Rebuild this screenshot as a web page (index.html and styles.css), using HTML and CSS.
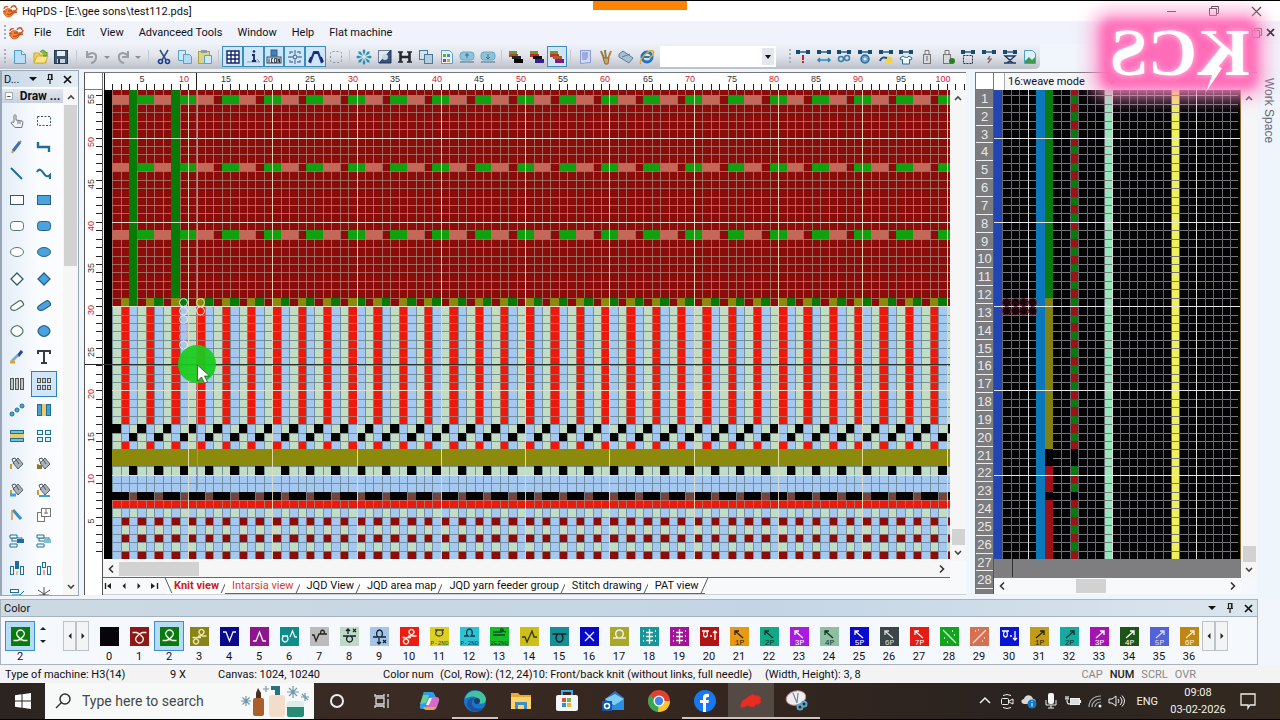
FILE: index.html
```html
<!DOCTYPE html>
<html lang="en">
<head>
<meta charset="utf-8">
<title>HqPDS - [E:\gee sons\test112.pds]</title>
<link rel="stylesheet" href="styles.css">
</head>
<body>
<header class="titlebar">
  <span class="ic logo" data-icon="crab"></span>
  <h1>HqPDS - [E:\gee sons\test112.pds]</h1>
  <span class="share-bar"></span>
  <div class="window-controls">
    <button aria-label="Minimize" data-icon="min"></button>
    <button aria-label="Restore" data-icon="restore"></button>
    <button aria-label="Close" data-icon="close"></button>
  </div>
</header>
<nav class="menubar">
  <span class="grip"></span><span class="ic logo" data-icon="crab"></span>
  <button>File</button><button>Edit</button><button>View</button><button>Advanceed Tools</button><button>Window</button><button>Help</button><button>Flat machine</button>
  <span class="menu-right"><button aria-label="Restore document" data-icon="restore"></button><button aria-label="Close document" data-icon="closeb"></button></span>
</nav>
<div class="toolbar">
  <span class="grip"></span>
  <div class="tg" data-tools="new open save"></div><i class="sep"></i>
  <div class="tg history" data-tools="undo drop redo drop"></div><i class="sep"></i>
  <div class="tg" data-tools="cut copy paste"></div><i class="sep thin"></i>
  <div class="tg" data-tools="*grid *info *iconv *snap *curve marquee"></div><i class="sep thin"></i>
  <div class="tg" data-tools="burst contrast H dup docc ovalU ovalD"></div><i class="sep thin"></i>
  <div class="tg" data-tools="layA layB *layC"></div><i class="sep thin"></i>
  <div class="tg" data-tools="note brushes tag ie"></div>
  <div class="combo"><select aria-label="Search"><option></option></select><span class="ic" data-icon="drop2"></span></div>
  <span class="grip second"></span>
  <div class="tg" data-tools="mRed mArrow mGears mGear mYellow mShirt usb usbg mFrame mBolt mX mDoc"></div>
</div>
<main class="work">
  <aside class="dock">
    <div class="dock-title"><span>D...</span><button aria-label="Options" data-icon="tri"></button><button aria-label="Pin" data-icon="pin"></button><button aria-label="Close" data-icon="closeb"></button></div>
    <div class="dock-body">
      <div class="dock-main">
        <button class="group"><i>−</i>Draw ...</button>
        <div class="palette" id="palette"></div>
      </div>
      <div class="vscroll dock-scroll"><button aria-label="Up" data-icon="up"></button><i></i><button aria-label="Down" data-icon="down"></button></div>
    </div>
  </aside>
  <section class="editor">
    <div class="corner"></div>
    <svg class="ruler-top" id="rulerTop"></svg>
    <svg class="ruler-left" id="rulerLeft"></svg>
    <svg class="fabric" id="fabric"></svg>
    <div class="vscroll"><button aria-label="Up" data-icon="up"></button><i></i><button aria-label="Down" data-icon="down"></button></div>
    <div class="hscroll"><button aria-label="Left" data-icon="left"></button><i></i><button aria-label="Right" data-icon="right"></button></div>
    <div class="tabs">
      <div class="tabnav"><button aria-label="First" data-icon="first"></button><button aria-label="Previous" data-icon="prev"></button><button aria-label="Next" data-icon="next"></button><button aria-label="Last" data-icon="last"></button></div>
      <button class="tab active">Knit view</button><button class="tab red">Intarsia view</button><button class="tab">JQD View</button><button class="tab">JQD area map</button><button class="tab">JQD yarn feeder group</button><button class="tab">Stitch drawing</button><button class="tab">PAT view</button>
    </div>
  </section>
  <section class="weave">
    <div class="corner"></div>
    <div class="mode"><i></i><button>16:weave mode</button><span data-icon="down" class="ic"></span></div>
    <div class="rows" id="rows"></div>
    <svg class="weave-grid" id="weave"></svg>
    <div class="vscroll"><button aria-label="Up" data-icon="up"></button><i></i><button aria-label="Down" data-icon="down"></button></div>
    <div class="hscroll"><button aria-label="Left" data-icon="left"></button><i></i><button aria-label="Right" data-icon="right"></button></div>
  </section>
  <aside class="sidetab">Work Space</aside>
</main>
<section class="colors">
  <div class="colors-title"><span>Color</span><button aria-label="Options" data-icon="tri"></button><button aria-label="Pin" data-icon="pin"></button><button aria-label="Close" data-icon="closeb"></button></div>
  <div class="colors-body">
    <div class="current" id="current"></div>
    <div class="spin"><button aria-label="Increase" data-icon="sup"></button><button aria-label="Decrease" data-icon="sdown"></button></div>
    <div class="pager"><button aria-label="Previous colors" data-icon="prev"></button><button aria-label="Next colors" data-icon="next"></button></div>
    <div class="swatches" id="swatches"></div>
    <div class="pager end"><button aria-label="Previous" data-icon="prev"></button><button aria-label="Next" data-icon="next"></button></div>
  </div>
</section>
<footer class="status">
  <span class="s1">Type of machine: H3(14)</span><span class="s2">9 X</span><span class="s3">Canvas: 1024, 10240</span><span class="s4">Color num</span><span class="s5">(Col, Row): (12, 24)10: Front/back knit (without links, full needle)</span><span class="s6">(Width, Height): 3, 8</span>
  <span class="lock">CAP</span><span class="lock on">NUM</span><span class="lock">SCRL</span><span class="lock">OVR</span>
</footer>
<div class="taskbar">
  <button class="start" aria-label="Start" data-icon="win"></button>
  <label class="search"><span class="ic" data-icon="mag"></span><input type="text" placeholder="Type here to search" aria-label="Type here to search"><span class="ic art" data-icon="bottles"></span></label>
  <button class="app" aria-label="Cortana" data-icon="cortana"></button><button class="app" aria-label="Task view" data-icon="taskview"></button><button class="app" aria-label="Copilot" data-icon="copilot"></button><button class="app run" aria-label="Edge" data-icon="edge"></button><button class="app" aria-label="Files" data-icon="folder"></button><button class="app" aria-label="Store" data-icon="store"></button><button class="app" aria-label="Outlook" data-icon="outlook"></button><button class="app" aria-label="Chrome" data-icon="chrome"></button><button class="app run" aria-label="Facebook" data-icon="fb"></button><button class="app run cur" aria-label="HqPDS" data-icon="hq"></button><button class="app run" aria-label="Snipping tool" data-icon="snip"></button>
  <div class="tray">
    <button aria-label="Show hidden icons" data-icon="chev"></button><button aria-label="Meet now" data-icon="meet"></button><button aria-label="OneDrive" data-icon="cloud"></button><button aria-label="Microphone" data-icon="mic"></button><button aria-label="Battery" data-icon="batt"></button><button aria-label="Network" data-icon="wifi"></button><button aria-label="Volume" data-icon="vol"></button>
    <span class="lang">ENG</span>
    <div class="clock"><span>09:08</span><span>03-02-2026</span></div>
    <button class="notif" aria-label="Notifications" data-icon="notif"></button>
  </div>
</div>
<div class="brand"><span>KCS</span></div>
<script src="app.js"></script>
</body>
</html>
```

FILE: styles.css
```css
* { box-sizing: border-box; }
body {
  margin: 0; height: 100vh; overflow: hidden; position: relative;
  display: flex; flex-direction: column;
  font-family: Roboto, "Noto Sans", sans-serif; font-size: 11px; line-height: 15px; color: #101016;
  background: #f1f6fc; border-top: 1px solid #000; border-bottom: 1px solid #000;
}
button { font: inherit; color: inherit; background: none; border: 0; padding: 0; margin: 0; display: inline-flex; align-items: center; justify-content: center; }
svg { display: block; flex: none; }
.ic { display: inline-flex; align-items: center; justify-content: center; }

.titlebar { height: 20px; flex: none; display: flex; align-items: center; padding: 0 18px 0 2px; background: #fff; position: relative; }
.titlebar h1 { font-size: 11px; font-weight: 400; margin: 0 0 0 4px; }
.share-bar { position: absolute; left: 50%; transform: translateX(-50%); top: 0; width: 94px; height: 9px; background: #ff8200; }
.window-controls { margin-left: auto; display: flex; gap: 30px; }

.menubar { height: 23px; flex: none; display: flex; align-items: center; gap: 15px; padding: 0 4px; background: #f0f3fb; }
.menubar > .logo { margin: 0 -5px 0 -13px; }
.menu-right { margin-left: auto; display: flex; gap: 2px; }
.grip { width: 2px; height: 15px; flex: none; background: repeating-linear-gradient(#a9aebb 0 2px, transparent 2px 4px); }

.toolbar { height: 25px; flex: none; display: flex; align-items: center; padding: 0 0 0 4px; background: linear-gradient(#eef1f8, #e2e5ec 45%, #bcc0c9); border-radius: 0 0 5px 0; width: 1040px; max-width: 100%; }
.tg { display: flex; align-items: center; }
.tg button { width: 21px; height: 21px; flex: none; }
.tg button:nth-child(3n) { width: 20px; }
.tg .drop { width: 9px; }
.tg.history button:not(.drop) { width: 22px; }
.tg button.sel { background: #cfe6f8; border: 1px solid #3c8cbc; }
.sep { width: 1px; height: 13px; background: #c3c8d1; margin: 0 4px 0 5px; flex: none; }
.sep.thin { margin: 0 3px; }
.toolbar > .grip { margin-right: 3px; }
.combo { flex: 1; min-width: 0; height: 21px; margin: 0 13px 0 3px; background: #fff; display: flex; }
.combo select { flex: 1; min-width: 0; border: 0; background: none; appearance: none; }
.combo .ic { width: 12px; margin: 2px; background: #e3e6ec; }
.toolbar > .grip.second { margin-right: 1px; }

.work { flex: 1; min-height: 0; display: flex; padding-top: 2px; background: #eef5fb; }
.dock { width: 79px; flex: none; display: flex; flex-direction: column; border: 1px solid #9aa7b8; border-width: 1px 1px 1px 2px; margin: -1px 0 3px; background: #fbfcff; }
.dock-title { height: 16px; display: flex; align-items: center; gap: 7px; padding-left: 2px; background: linear-gradient(90deg, #c8d8e6, #e6eef5); }
.dock-title span { width: 17px; }
.dock-body { flex: 1; min-height: 0; display: flex; padding-top: 2px; }
.dock-main { flex: 1; min-width: 0; display: flex; flex-direction: column; overflow: hidden; background: linear-gradient(90deg, #e4edf7, #fafcff 60%); }
.group { height: 14px; background: linear-gradient(#e1e6ef, #c9d1df); font-weight: 700; font-size: 12px; white-space: nowrap; gap: 7px; flex: none; }
.group i { font-style: normal; font-size: 8px; line-height: 7px; width: 8px; height: 8px; border: 1px solid #a5a9b2; background: #fff; color: #333; }
.palette { flex: 1; margin: 5px 6px -12px 2px; display: grid; grid-template-columns: 1fr 1fr; grid-auto-rows: 1fr; min-height: 0; }
.palette button { min-height: 0; }
.palette button.sel { background: #d0e5f7; border: 1px solid #3080b8; }
.vscroll, .hscroll { background: #f6f6f7; display: flex; min-width: 0; min-height: 0; }
.vscroll { flex-direction: column; align-items: center; }
.vscroll i, .hscroll i { background: #d2d2d3; }
.vscroll button { height: 16px; flex: none; }
.vscroll i { width: 13px; height: 16px; margin-top: auto; }
.dock-scroll { width: 15px; }
.dock-scroll i { height: 161px; margin-top: 0; margin-bottom: auto; }
.hscroll { align-items: center; }
.hscroll button { width: 16px; }
.hscroll button:last-child { margin: 0 0 0 auto; }

.editor { flex: 1; min-width: 0; margin: 1px 0 4px 5px; display: grid; grid-template-columns: 18px 1fr 16px; grid-template-rows: 17px 1fr 17px 17px; background: #f8f9fb; border-left: 1px solid #555; border-top: 1px solid #777; }
.corner { border: 1px solid #777; border-width: 0 1px 1px 0; background: #fff; }
.ruler-top { grid-column: 2 / 4; width: 100%; height: 100%; background: #fff; }
.ruler-left { width: 100%; height: 100%; background: #fff; grid-row: 2 / 5; grid-column: 1; border-right: 1px solid #555; }
.fabric { width: 100%; height: 100%; grid-row: 2; grid-column: 2; }
.editor .hscroll { grid-column: 2 / 3; border-bottom: 1px solid #666; }
.editor .hscroll i { width: 80px; height: 14px; }
.tabs { grid-column: 2 / 4; display: flex; align-items: stretch; border-bottom: 1px solid #cdd2d8; }
.tabnav { display: flex; width: 57px; justify-content: space-between; margin-right: 7px; }
.tab { position: relative; padding: 0 6px 0 7px; white-space: nowrap; border-bottom: 1px solid #666; background: #fff; }
.tab::after, .tab.active::before { content: ""; position: absolute; top: 0; bottom: 0; right: 0; border-right: 1px solid #555; transform: skewX(-24deg); }
.tab.active::before { right: auto; left: 1px; transform: skewX(24deg); }
.tab.active { color: #c8201c; font-weight: 700; border-bottom-color: #fff; }
.tab.red { color: #d63a32; }

.weave { width: 282px; flex: none; margin: 1px 0 5px 9px; display: grid; grid-template-columns: 18px 1fr 16px; grid-template-rows: 17px 1fr 16px; border: 1px solid #777; border-width: 1px 0 0 1px; background: #f4f7fb; }
.mode { grid-column: 2 / 4; display: flex; align-items: center; background: #f5f6fa; }
.mode i { width: 11px; height: 100%; background: #fff; border-right: 1px solid #aaa; margin-right: 3px; }
.mode .ic { margin-left: 22px; }
.rows { grid-row: 2 / 4; display: flex; flex-direction: column; background: #7c7c7e; padding-bottom: 5px; border-right: 1px solid #555; }
.rows span { flex: 1; min-height: 0; font: 13px/17px "Liberation Sans", sans-serif; color: #e8e8ea; text-align: center; border-bottom: 1px solid #eee; }
.weave-grid { width: 100%; height: 100%; grid-row: 2; grid-column: 2; background: #7e7e80; }
.weave .hscroll { grid-column: 2; grid-row: 3; background: #f7f9fb; }
.weave .hscroll i { width: 30px; height: 14px; margin-left: 66px; }
.sidetab { flex: 1 0 23px; max-width: 23px; writing-mode: vertical-rl; font: 12px/23px "Liberation Sans", sans-serif; color: #667; padding-top: 7px; white-space: nowrap; }

.colors { height: 66px; flex: none; margin-right: 22px; border: 1px solid #a9b3bf; display: flex; flex-direction: column; background: #f5f8fd; }
.colors-title { height: 17px; flex: none; display: flex; align-items: center; gap: 8px; padding: 0 3px; background: linear-gradient(90deg, #ccd9e2, #c3d5e4 60%, #dbe5ee); border-bottom: 1px solid #a3b3c2; }
.colors-title span { margin-right: auto; }
.colors-body { flex: 1; display: flex; padding: 4px 0 0 4px; align-items: flex-start; }
.sw { display: flex; flex-direction: column; align-items: center; flex: 1 1 30px; min-width: 0; line-height: 12px; }
.sw b { width: 30px; height: 30px; display: flex; align-items: center; justify-content: center; border: 1px solid transparent; font-weight: 400; }
.sw.sel b { background: #b6dcf5; border-color: #3d8ec8; }
.current { width: 30px; flex: none; }
.spin { width: 16px; height: 28px; display: flex; flex-direction: column; justify-content: space-between; padding: 5px 0; }
.pager { display: flex; height: 30px; flex: none; }
.pager button { width: 13px; border: 1px solid #bdc2c9; background: #f3f4f6; }
.spin + .pager { margin: 0 5px 0 13px; }
.swatches { flex: 1; display: flex; }
.pager.end { margin: 0 29px 0 -2px; }

.status { height: 18px; flex: none; display: flex; align-items: center; padding: 0 84px 0 5px; background: #f3f3f4; white-space: nowrap; }
.status span { flex-shrink: 0; }
.s1 { width: 165px; } .s2 { width: 48px; } .s3 { width: 165px; } .s4 { width: 57px; } .s5 { width: 325px; } .s6 { flex: 1; }
.lock { color: #888; margin-left: 7px; }
.lock.on { color: #222; font-weight: 500; }

.taskbar { height: 36px; flex: none; display: flex; background: linear-gradient(90deg, #2b2420, #3a2b24 30%, #33261f 60%, #2a2320 80%, #33291f); color: #f4f0ec; }
.start { width: 45px; }
.search { width: 269px; background: #f7f8f8; display: flex; align-items: center; padding: 0 3px 0 9px; }
.search input { flex: 1; min-width: 0; border: 0; background: none; font: 14px/20px Roboto, "Noto Sans", sans-serif; padding: 0 0 0 10px; }
.search input::placeholder { color: #45474a; opacity: 1; }
.app { width: 46px; position: relative; }
.app.cur { background: #544943; }
.app.run { border-bottom: 2px solid #cfc4be; padding-top: 2px; background-clip: padding-box; }
.tray { margin-left: auto; display: flex; align-items: center; padding-right: 21px; }
.tray > button { width: 22px; }
.lang { margin: 0 12px 0 8px; }
.clock { display: flex; flex-direction: column; align-items: center; width: 56px; line-height: 17px; font-size: 11px; }
.tray > .notif { margin-left: 11px; }

.brand { position: absolute; right: 24px; top: 18px; width: 152px; height: 66px; display: flex; align-items: center; justify-content: center; pointer-events: none; }
.brand::before { content: ""; position: absolute; inset: 0 -2px -4px -4px; border-radius: 12px; background: #ff6db8; box-shadow: 0 0 14px 10px #ff9acfbb; filter: blur(5px); }
.brand::after { content: ""; position: absolute; right: 34px; top: 46px; width: 16px; height: 27px; background: #fff; clip-path: polygon(60% 0, 100% 12%, 0 100%); }
.brand span { position: relative; font: 700 68px/60px "Liberation Serif", serif; color: #fff; transform: scaleX(-1); text-shadow: 0 0 6px #ffd0ea; }
```

FILE: app.js
```javascript
const T = '#1d6f96', B = '#4aa3dc';
const svg = (w, h, inner, vb) => `<svg width="${w}" height="${h}" viewBox="${vb || `0 0 ${w} ${h}`}" fill="none">${inner}</svg>`;
const p = (d, c = '#222', w = 1, f = 'none') => `<path d="${d}" stroke="${c}" stroke-width="${w}" fill="${f}"/>`;
const r = (x, y, w, h, f, s = 'none') => `<rect x="${x}" y="${y}" width="${w}" height="${h}" fill="${f}" stroke="${s}"/>`;
const c = (x, y, q, f, s = 'none', w = 1) => `<circle cx="${x}" cy="${y}" r="${q}" fill="${f}" stroke="${s}" stroke-width="${w}"/>`;
const i16 = inner => svg(16, 16, inner);
const mach = inner => i16(p('M1 3h14', '#1d6590', 1.500) + r(1, 1, 4, 4, '#174b72') + r(11, 1, 4, 4, '#174b72') + inner);
const bars = (a, b, d) => i16(r(1, 2, 8, 4, '#6b9c2a') + r(1, 5, 9, 3, a) + r(4, 7, 9, 3, b) + r(6, 10, 9, 4, d));
const pot = x => p('M4 8l5-5 5 6-5 5z', '#54606a', 1, '#a8b2b8') + p('M5 9L3 4l3-1 4 6', '#4b555c') + p('M2 9v5', '#c89a26', 2) + x;
const need = f => r(3, 5, 10, 3, '#fff', T) + p('M1 2h7v3H1z', T, 1, f) + p('M1 11h7v3H1z', T, 1, '#fff');

const icons = {
  crab: i16(p('M2 11c-1-4 3-6 6-5s5 5 1 7-6 0-6-2z', '#d2561c', 1, '#ee8c3c') + p('M2 6c0-2 2-3 4-2M9 5c1-3 5-3 5 0M11 8c3 0 4-1 4-3M1 8l3 1M10 10l5-1M6 8h4M5 11c2 1 3 1 5-1', '#c64b16', 1.3)),
  min: svg(12, 12, p('M1 6.5h9', '#333')), restore: svg(12, 12, p('M1.500 3.500h7v7h-7zM3.500 3.500v-2h7v7h-2', '#333')),
  close: svg(12, 12, p('M2 2l9 9M11 2l-9 9', '#333', 1.100)), closeb: svg(11, 11, p('M2 2l7 7M9 2l-7 7', '#111', 1.700)),
  tri: svg(10, 10, p('M1 3h8L5 7z', 'none', 0, '#111')), pin: svg(10, 12, p('M2 6.500h6M3.500 6V1.500h3V6M5 7v4M7 1v5', '#222', 1.200)),
  up: svg(10, 10, p('M2 7l3-3 3 3', '#444', 1.600)), down: svg(10, 10, p('M2 3l3 3 3-3', '#444', 1.600)),
  left: svg(10, 10, p('M7 1.500L3.500 5 7 8.500', '#333', 1.600)), right: svg(10, 10, p('M3 1.500L6.500 5 3 8.500', '#333', 1.600)),
  prev: svg(8, 8, p('M5.500 1v6L2.500 4z', 'none', 0, '#222')), next: svg(8, 8, p('M2.500 1v6l3-3z', 'none', 0, '#222')),
  first: svg(10, 8, p('M8 1v6L4 4z', 'none', 0, '#222') + p('M2.500 1v6', '#222', 1.400)), last: svg(10, 8, p('M1 1v6l4-3z', 'none', 0, '#222') + p('M7.500 1v6', '#222', 1.400)),
  sup: svg(6, 5, p('M0 4h6L3 1z', 'none', 0, '#222')), sdown: svg(6, 5, p('M0 1h6L3 4z', 'none', 0, '#222')),
  drop2: svg(8, 8, p('M1 2h6L4 6z', 'none', 0, '#111')),
  new: i16(p('M2.500 1.500h7l4 4v9h-11z', '#4c9cc8', 1, '#b9def5') + p('M9.500 1.500v4h4', '#4c9cc8', 1, '#e9f7ff')),
  open: i16(p('M1 4h5l1 2h6v8H1z', '#d3a52f', 1, '#f2ce5b') + p('M1 14l3-7h11l-3 7z', '#d8ad3a', 1, '#fae588') + p('M7 3c2-3 5-2 6 1l1-1v4h-4l1-1', '#5a9a24', 1, '#83bb44')),
  save: i16(r(1.500, 1.500, 13, 13, '#40576e', '#24384d') + r(4, 2, 8, 5, '#e6edf3') + r(4, 10, 8, 4, '#c5d4df') + r(5, 10, 2, 4, '#24384d')),
  undo: i16(p('M3 7c4-5 10-3 9 2-0 3-3 5-5 5M3 2v6h6', '#9a9ea5', 2)), redo: i16(p('M13 7C9 2 3 4 4 9c0 3 3 5 5 5M13 2v6H7', '#9a9ea5', 2)),
  drop: svg(7, 8, p('M0 3h6L3 6z', 'none', 0, '#8a8e95')),
  cut: i16(p('M4 1l6 10M12 1L6 11', '#33517e', 1.600) + c(4.500, 12.500, 2, 'none', '#1d3f86', 1.600) + c(11.500, 12.500, 2, 'none', '#1d3f86', 1.600)),
  copy: i16(p('M1.500 1.500h7v10h-7z', '#5a9fca', 1, '#cfe9fa') + p('M6.500 5.500h6l2 2v7h-8z', '#5a9fca', 1, '#b4dbf3')),
  paste: i16(r(1.500, 2.500, 11, 12, '#dcd67c', '#a5a052') + r(4, 1, 6, 3, '#8f9aa0') + p('M7.500 6.500h7v8h-7z', '#5a9fca', 1, '#cdeafa')),
  grid: i16(r(2, 2, 12, 12, '#fff') + p('M2 2h12v12H2zM6 2v12M10 2v12M2 6h12M2 10h12', '#14296b', 1.400)),
  info: i16(p('M1 13h13l-3-3', '#8fa0b4', 1, '#c4d3e0') + p('M8 5v7M6 12h4M6 6h2', '#14296b', 1.800) + c(8, 2.500, 1.300, '#14296b')),
  iconv: i16(r(5, 1, 6, 6, '#3f82bd', '#2a5f95') + r(1, 8, 14, 6, '#dbe4ea', '#33495b') + p('M3 9.500v4M7 9.500H5.500v4H7M8.500 9.500h2v4h-2zM12 13.500v-4l1.500 4v-4', '#14202c', .8)),
  snap: i16(p('M8 1v5M8 10v5M1 8h5M10 8h5M3 5V3h3M10 3h3v2M3 11v2h3M10 13h3v-2', '#5d7fa6', 1.300) + r(6.500, 6.500, 3, 3, 'none', '#5d7fa6')),
  curve: i16(p('M2 14L6 3h4l4 11', '#1c3a8c', 2.200) + p('M3 8l-2 5M13 8l2 5M6 4h4', '#14296b', 2)),
  marquee: i16(`<rect x="2.500" y="2.500" width="11" height="11" rx="2" stroke="#8c9097" stroke-dasharray="2 2"/>`),
  burst: i16([0, 45, 90, 135, 180, 225, 270, 315].map(a => `<path transform="rotate(${a} 8 8)" d="M8 0l1.500 2L8 6.500 6.500 2z" fill="#2492b4"/>`).join('')),
  contrast: i16(r(1.500, 1.500, 12, 12, '#dfe7ef', '#6a7e96') + p('M14 1L2 14h12z', '#22365c', 1, '#39527e') + c(8, 8, 3, '#c7d6e5')),
  H: i16(p('M3.500 3v10M12.500 3v10M4 8h8', '#25282e', 2.600) + p('M1 3h5M1 13h5M10 3h5M10 13h5', '#25282e', 1.400)),
  dup: i16(r(1.500, 1.500, 8, 9, '#d4e4ef', '#4a7897') + r(6.500, 5.500, 8, 9, '#b6cedd', '#4a7897')),
  docc: i16(p('M2.500 1.500h8l3 3v10h-11z', '#5a9fca', 1, '#e4f4fd') + r(4, 5, 3, 3, '#5aac3c') + r(8, 5, 3, 3, '#4f86c6') + r(4, 10, 3, 3, '#c63a2a') + r(8, 10, 3, 3, '#d9a62c')),
  ovalU: i16('<rect x="1" y="3" width="14" height="8" rx="3" fill="#8cc4dc" stroke="#6fa6c2"/>' + p('M8 4v5M6 6h4M1 13h14', '#3c6f8c')), ovalD: i16('<rect x="1" y="3" width="14" height="8" rx="3" fill="#8cc4dc" stroke="#6fa6c2"/>' + p('M8 5v5M6 8l2 2 2-2M1 13h14', '#3c6f8c')),
  layA: bars('#a55033', '#222', '#000'), layB: bars('#b82c2c', '#111', '#332096'), layC: bars('#c23232', '#b05b2b', '#7d1d88'),
  note: i16(p('M3.500 1.500h10v12l-10 1z', '#8b9ad4', 1, '#d3dbf7') + p('M5 4h6M5 6h6M5 8h6M5 10h5', '#6b7cc4')),
  brushes: i16(p('M3 2l4 10', '#b06838', 2) + p('M13 2L9 12', '#c77a3c', 2) + p('M7 1l1 9', '#6d8b45', 2) + p('M5 9h6l-1 6H7z', '#8a6b3a', 1, '#c9a565')),
  tag: i16(p('M1 5l4-3 10 7-4 5L1 8z', '#5b7d99', 1, '#a7c1d3') + p('M4 8l8-3', '#5b7d99')),
  ie: i16(c(8, 8, 5, 'none', '#1b76c4', 3) + p('M4 8h9', '#1b76c4', 2) + p('M2 15C-1 12 9 0 14 2c2 3-2 6-4 7', '#e3a52a', 1.500)),
  mRed: mach(p('M8 6v5M8 12v2', '#c8202a', 2)), mArrow: mach(p('M2 11h12M4 9l-2 2 2 2M12 9l2 2-2 2', '#2b86b8', 1.600)),
  mGears: mach(c(5, 10, 2.500, 'none', '#3b7fa8', 1.600) + c(11, 9, 2.500, 'none', '#3b7fa8', 1.600)), mGear: mach(c(8, 10, 4, '#68a8d2', '#266b98', 1.500) + c(8, 10, 1.500, '#d4e9f5')),
  mYellow: mach(c(11, 11, 3.500, '#f2d43c') + p('M2 12c1-4 4-4 7-3', '#1c4d82', 2)), mShirt: mach(p('M5 7l-3 2 1 2 1.500-.5V15h7v-4.500l1.500.5 1-2-3-2c-1 2-4 2-6 0z', '#266b98', 1, '#eef7fc')),
  usb: i16(p('M6 1.500h4v4H6z', '#777') + r(4.500, 5.500, 7, 9, '#d9dbdd', '#777') + p('M8 7v5', '#666')), usbg: i16(p('M5 1.500h4v4H5z', '#777') + r(3.500, 5.500, 7, 9, '#d9dbdd', '#777') + c(12, 12, 3, '#2c7d2b')),
  mFrame: mach(`<rect x="3.500" y="6.500" width="9" height="8" stroke="#234" stroke-dasharray="2 1"/>`), mBolt: mach(p('M9 7l-2 3h3l-3 4', '#7b5360', 1.200)), mX: mach(p('M3 7h10l-8 7h6zM2 14h12', '#1b3d66', 1.400)),
  mDoc: i16(p('M2.500 1.500h8l3 3v10h-11z', '#4c9cc8', 1, '#dff2fc') + p('M3 12l4-4 3 3 3-3v6H3z', 'none', 0, '#3c9a53')),
  hand: i16(p('M5 9V2.500c0-1 2-1 2 0V7l6 1c1 .3 1 1 .8 2l-1 4.500H6L2 10c0-1 1.500-1.500 3-.5M9 8v3M11 8v3', '#777')), select: i16('<rect x="1.500" y="3.500" width="13" height="9" stroke="#3a536c" stroke-dasharray="2 1.500"/>'),
  pencil: i16(p('M4 12l7-9', '#476fae', 3) + p('M3 14l1-2', '#d39a3d', 2) + p('M11 3l1-1', '#888', 2)), poly: i16(p('M2 3v5h11v5', T, 2.400)),
  line: i16(p('M2 2l11 11', T, 2)), wave: i16(p('M1 6c3-6 6 1 8 3s4 1 5 0v4', T, 2)),
  rect: i16(r(1.500, 3.500, 13, 9, '#fff', '#36566e')), rectf: i16(r(1.500, 3.500, 13, 9, B, '#285f8c')),
  rrect: i16('<rect x="1.500" y="3.500" width="13" height="9" rx="3" fill="#fff" stroke="#4e7a70"/>'), rrectf: i16('<rect x="1.500" y="3.500" width="13" height="9" rx="3" fill="#4aa3dc" stroke="#285f8c"/>'),
  oval: i16('<ellipse cx="8" cy="8" rx="6.500" ry="4.500" fill="#fff" stroke="#4e7a70"/>'), ovalf: i16('<ellipse cx="8" cy="8" rx="6.500" ry="4.500" fill="#4aa3dc" stroke="#285f8c"/>'),
  dia: i16(p('M8 2l6 6-6 6-6-6z', '#285f6c', 1.300, '#fff')), diaf: i16(p('M8 2l6 6-6 6-6-6z', '#285f8c', 1.300, B)),
  free: i16(p('M2 12C1 10 2 9 4 8l6-4c1-.5 2-.5 3 .5s2 3 1 4l-6 4c-2 1.200-5 1.500-6-.5z', '#4e6a60', 1.200, '#fff')), freef: i16(p('M2 12C1 10 2 9 4 8l6-4c1-.5 2-.5 3 .5s2 3 1 4l-6 4c-2 1.200-5 1.500-6-.5z', '#285f8c', 1.200, B)),
  hex: i16(p('M8 2.500c3 .5 6 3 6 5.500s-3 5-6 5.500c-3-.5-6-3-6-5.500s3-5 6-5.500z', '#4e7a70', 1.200, '#fff')), hexf: i16(p('M8 2.500c3 .5 6 3 6 5.500s-3 5-6 5.500c-3-.5-6-3-6-5.500s3-5 6-5.500z', '#285f8c', 1.200, B)),
  picker: i16(p('M9 7l4-5', '#244b94', 3) + p('M3 12l6-6', '#72a9d6', 2.500) + p('M1 13h5', '#d5a82d', 3)), text: i16(p('M2 5V2h12v3M8 2v12M5 14h6', '#333c44', 2)),
  cols3: i16(r(1.500, 2.500, 3, 11, '#bcc3c9', '#555') + r(6.500, 2.500, 3, 11, '#bcc3c9', '#555') + r(11.500, 2.500, 3, 11, '#bcc3c9', '#555')),
  cells: i16([1.500, 6.500, 11.500].map(x => r(x, 2.500, 3, 4, '#ccd3d8', '#555') + r(x, 9.500, 3, 4, '#ccd3d8', '#555')).join('')),
  dots: i16(c(3, 12, 2, '#5aa3d0', T) + c(8, 8, 2, '#5aa3d0', T) + c(13, 4, 2, '#5aa3d0', T)), bar2: i16(r(1.500, 2.500, 4, 11, '#4aa0c8', T) + r(6, 2, 4, 12, '#ecc96a') + r(10.500, 2.500, 4, 11, '#4aa0c8', T)),
  rows3: i16(r(1.500, 2.500, 13, 3, '#74c1d2', T) + r(1, 6, 14, 4, '#ecc96a') + r(1.500, 10.500, 13, 3, '#74c1d2', T)), sq4: i16([1.500, 9.500].map(x => r(x, 2.500, 5, 4, '#d4f0f8', T) + r(x, 9.500, 5, 4, '#d4f0f8', T)).join('')),
  potA: i16(pot('')), potB: i16(pot(r(1, 10, 5, 4, '#86772a'))), potC: i16(pot(p('M1 14h6', '#3f9ed4', 3))), potD: i16(pot(p('M3 15h11', '#3f9ed4', 2))),
  pen2: i16(p('M4 3l8 9', '#3c8dc4', 3) + p('M3 3v10', '#d0983e', 1.500)), pages: i16(r(1.500, 5.500, 7, 9, '#fff', '#777') + r(5.500, 1.500, 9, 8, '#fff', '#777') + p('M10 2v5M8 6h4', '#777')),
  nA: i16(need('#fff') + r(8, 6, 7, 4, T)), nB: i16(need('#fff') + r(8, 6, 7, 4, '#7cc1d8')),
  vA: i16(r(1.500, 6.500, 3, 8, '#fff', T) + r(6, 1, 4, 8, T) + r(11.500, 6.500, 3, 8, '#fff', T) + p('M8 11v4', '#d78d3a')), vB: i16(r(1.500, 6.500, 3, 8, '#fff', T) + r(6.500, 2.500, 3, 5, '#fff', T) + r(11.500, 6.500, 3, 8, '#fff', T) + p('M8 10v5', '#d74d3a')),
  eA: i16(r(1.500, 3.500, 8, 3, '#fff', T) + p('M9 11l6-6M3 9h9', T)), eB: i16(p('M2 4l12 8M14 4L2 12M8 1v13M3 9h10', '#555')),
  win: svg(16, 16, p('M0 2.300l6.500-1V7.500H0zM7.500 1.200L16 0v7.500H7.500zM0 8.500h6.500v6.200L0 13.800zM7.500 8.500H16V16l-8.500-1.200z', 'none', 0, '#fff')),
  mag: svg(18, 18, c(11, 7, 5, 'none', '#333', 1.500) + p('M7.500 10.500L2 16', '#333', 1.500)),
  bottles: svg(72, 34, p('M2 17h10M7 12v10M3.500 13.500l7 7M10.500 13.500l-7 7M24 5h6M27 2v6M48 8h12M54 2v12M50 4l8 8M58 4l-8 8M62 13h8M66 9v8M63 10l6 6', '#6f9ab0', 1.200) + '<rect x="14" y="14" width="11" height="18" rx="2" fill="#a9602b"/><path d="M17 14V9l2-5 3 5v5z" fill="#4b2d22"/><rect x="30" y="11" width="16" height="22" rx="3" fill="#f3dcca"/><path d="M36 11V6h-4V2h9v9z" fill="#2c7282"/><rect x="48" y="17" width="17" height="16" rx="2" fill="#dbeee9"/><path d="M48 23h17v8q0 2-2 2H50q-2 0-2-2z" fill="#278b78"/>'),
  cortana: svg(16, 16, c(8, 8, 6, 'none', '#eee', 2)), taskview: svg(18, 16, p('M1 1v2h9V1M2 5h8v6H2zM1 15v-2h9v2M14 1v3M14 6v9', '#ddd', 1.300)),
  copilot: svg(22, 20, p('M6 1h8q2 0 3 3l1 3h-5l-4 9q-1 2-3 2H4q-3 0-2-4l3-10q0-3 1-3z', 'none', 0, '#2c9ee8') + p('M2 13l3-9h6L8 12z', 'none', 0, '#69cf93') + p('M16 19H8q-2 0-3-3h3l5-10h5q4 0 3 4l-2 6q-1 3-3 3z', 'none', 0, '#d46bc8') + p('M8 16h10q-1 3-3 3H8q-2 0-3-3z', 'none', 0, '#f2a24c') + p('M11 7h3l-3 7H8z', 'none', 0, '#f4f0e8')),
  edge: svg(24, 24, c(12, 12, 11, '#1676c9') + p('M2 10C4-1 21-1 23 10c0 6-9 6-8 2 0-6-9-5-13-2z', 'none', 0, '#42c3a0') + p('M9 13c-1 7 8 8 12 5-4 7-15 6-17-2 0-6 5-8 8-6-2 0-3 1-3 3z', 'none', 0, '#1d539e') + c(14, 12, 3, '#1b3f6a')),
  folder: svg(22, 20, p('M1 2h7l2 2h11v14H1z', 'none', 0, '#eba832') + r(1, 6, 20, 12, '#ffd368') + p('M5 18v-7h12v7h-3v-4H8v4z', 'none', 0, '#3c8ec9')),
  store: svg(24, 24, '<rect x="1" y="6" width="22" height="16" rx="2" fill="#f4f6f7"/>' + p('M7 6V2h10v4', '#4aa7dc', 2) + r(7, 9, 4, 4, '#e05034') + r(12, 9, 4, 4, '#7bb53a') + r(7, 14, 4, 4, '#3191ce') + r(12, 14, 4, 4, '#f3b42c')),
  outlook: svg(24, 22, p('M4 9l10-8 9 7v12H4z', 'none', 0, '#2b72d4') + p('M4 9l10-5 9 5-9 7z', 'none', 0, '#7ecdf4') + p('M23 9v11H6z', 'none', 0, '#2b8ee0') + r(1, 11, 10, 10, '#1556ad') + c(6, 16, 2.500, 'none', '#fff', 1.500)),
  chrome: svg(24, 24, c(12, 12, 11, '#df4330') + p('M12 12L2.500 6.500A11 11 0 0 0 12 23z', 'none', 0, '#36a853') + p('M12 12h11A11 11 0 0 1 11 23z', 'none', 0, '#fbc72b') + c(12, 12, 5.500, '#fff') + c(12, 12, 4.200, '#4583ee')),
  fb: svg(24, 24, c(12, 12, 11, '#1877f2') + p('M10 23v-9H7v-3h3V8.500C10 5 13 4.500 16 5v3c-3-.5-3 .5-3 3h3l-.5 3H13v9z', 'none', 0, '#fff')),
  hq: svg(24, 18, p('M2 13c0-5 4-5 6-7 4-4 6-4 9-2 3-1 6 2 4 4 2 2-1 5-4 4-2 4-6 3-8 1-2 1-4 3-7 2z', '#d72a22', 1, '#ea2d24')),
  snip: svg(24, 24, '<ellipse cx="11" cy="9" rx="10" ry="7" fill="#eee" stroke="#b88" transform="rotate(-15 11 9)"/>' + p('M8 4l4 10M13 4l-1 10', '#789', 1.200) + c(15, 18, 2.500, 'none', '#57a6cf', 2) + c(19, 15, 2.500, 'none', '#57a6cf', 2)),
  chev: svg(14, 14, p('M2 9l5-5 5 5', '#eee', 1.500)), meet: svg(16, 16, '<rect x="2.500" y="5.500" width="7" height="6" rx="1" stroke="#eee"/>' + p('M10 8l4-2v5l-4-2M4 2.500q4-2 8 0M4 14.500q4 2 8 0', '#eee')),
  cloud: svg(18, 16, p('M4 11c-4-1-3-5 0-5 1-5 8-5 9 0 4 0 3 5 0 5z', 'none', 0, '#d6d8da') + c(12, 11, 4.500, '#1475c5') + p('M12 10v3.500M12 8v1', '#fff')),
  mic: svg(14, 16, '<rect x="4" y="0" width="6" height="11" rx="2" fill="#f4f4f4"/>' + p('M2 7v5h10V7M7 12v3M4 15h6', '#eee')), batt: svg(18, 14, r(6.500, 4.500, 9, 6, '#ddd', '#eee') + p('M16.500 6v3M1 5h4M2 2v3M4 2v3M3 6c0 4 1 4 3 4', '#eee', 1.200)),
  wifi: svg(16, 16, p('M2 14C2 7 7 3 14 3M5 14c0-5 4-8 9-8M8 14c0-3 3-5 6-5', '#aaa', 1.200) + c(13, 13, 1.500, '#eee')), vol: svg(18, 14, p('M1 5h3l4-3v10L4 9H1zM10 5q2 2 0 4M12 3q4 4 0 8M14 1.500q5 5.500 0 11', '#eee')),
  notif: svg(18, 18, p('M2 2h14v11h-5l-2 3v-3H2z', '#eee', 1.300)),
};

document.querySelectorAll('[data-icon]').forEach(e => { e.innerHTML = icons[e.dataset.icon]; });
const button = n => {
  const sel = n[0] === '*', id = n.replace('*', '');
  return `<button class="${id === 'drop' ? 'drop' : ''}${sel ? 'sel' : ''}" aria-label="${id}">${icons[id]}</button>`;
};
document.querySelectorAll('[data-tools]').forEach(e => { e.innerHTML = e.dataset.tools.split(' ').map(button).join(''); });
document.getElementById('palette').innerHTML = 'hand select pencil poly line wave rect rectf rrect rrectf oval ovalf dia diaf free freef hex hexf picker text cols3 *cells dots bar2 rows3 sq4 potA potB potC potD pen2 pages nA nB vA vB eA eB'.split(' ').map(button).join('');
document.getElementById('rows').innerHTML = Array.from({ length: 28 }, (_, i) => `<span>${i + 1}</span>`).join('');

/* stitch colours */
const loopU = 'M2.500 13.500h4C9 13 11 11 12.500 9A3.700 3.700 0 1 0 6.500 9C8 11 10 13 12.500 13.500H16.500';
const loopD = 'M2.500 5.500h4C9 6 11 8 12.500 10A3.700 3.700 0 1 1 6.500 10C8 8 10 6 12.500 5.500H16.500';
const small = 'M8 9h2l3.500-2.500a2.500 2.500 0 1 0-4 0L12 9h4.500M2.500 10.500h2l3.500 2.500a2.500 2.500 0 1 1-4 0L7 10.500h4';
const tree = 'M9.500 2v15M6 5.500h7M6 9.500h7M6 13.500h7M3 4h1M15 4h1M3 9h1M15 9h1M3 14h1M15 14h1';
const arrL = 'M13 11L5 4M5 8V4h4', arrR = 'M6 11l8-7M10 4h4v4';
const stitch = [
  ['#05050a', ''], ['#8c1818', loopD], ['#087a10', loopU], ['#8a8418', small, '#eee8b0'], ['#0a0a8c', 'M3 5h3l3.500 9L13 5h3'], ['#8c1690', 'M3 14h3l3.500-9 3.500 9h3'],
  ['#0c8c8c', 'M2 9h6M6.500 9c3 2 1 6-1.500 6s-4-4-1-6M10 10l2.500-6L15 10h2'], ['#bcbcbc', 'M2 8h2l2 6 3-7h8M11 7c-2-5 5-5 3 0', '#222'], ['#bfd9c2', 'M3 9h13M8 9c-3 3-1 6 1.500 6s4.500-3 1.500-6M8 7V2M6 4l2-2 2 2M13 2l3 3M16 2l-3 3', '#123'], ['#a5c5e8', 'M3 10h13M8 10c-3-3-1-7 1.500-7s4.500 4 1.500 7M9 11v6M7 15l2 2 2-2M13 13l3 3M16 13l-3 3', '#123'],
  ['#ee1c10', small], ['#ded020', 'M5 3h9M7 3c-3 5 0 6 2.500 6S14 7 12 3', '#443', 'P-2ND'], ['#2cc4d4', 'M4 9h4C5 6 7 2 9.500 2s4 4 1.500 7h4', '#134', 'P-2ND'], ['#14bc28', 'M3 5h8c4 0 2-4 0-3-2 2 2 2 5 3M3 8h12', '#142', '2E2ND'], ['#cdbf16', 'M2 10h3l2 5 5-11 2 6h3', '#332'], ['#168f96', 'M2.500 7h14M7.500 7c-3 4-1 8 2 8s5-4 2-8', '#122'],
  ['#0808c8', 'M5 5l9 9M14 5l-9 9'], ['#a9a82a', 'M3 11h13M7.500 10.500C4 7 6 3 9.500 3s5.500 4 2 7.500', '#eee'], ['#15969a', tree], ['#a3149a', tree], ['#b11414', 'M2 4h7M4.500 4c-4 8 6 8 2 0M10 9h2M15 13V4M13 6l2-2 2 2', '#fff'],
  ['#e49a14', arrL, '#321', '1P'], ['#12a888', arrL, '#132', '2P'], ['#a81ce0', arrL, '#fff', '3P'], ['#8fbfa2', arrL, '#132', '4P'], ['#0a0ad0', arrL, '#fff', '5P'], ['#3c4648', arrL, '#ddd', '6P'], ['#e41c14', arrL, '#fff', '7P'],
  ['#12a41c', 'M3 3l13 13M12 4h1M14 8h1M4 11h1M7 15h1', '#dfd'], ['#d6714e', 'M16 3L3 16M5 4h1M8 3h1M12 14h1M14 11h1', '#fde'], ['#0a14d4', 'M2 4h7M4.500 4c-4 8 6 8 2 0M10 9h2M15 4v9M13 11l2 2 2-2', '#fff'],
  ['#c39c18', arrR, '#221', '1P'], ['#16aaa2', arrR, '#132', '2P'], ['#a414b0', arrR, '#fff', '3P'], ['#1f5418', arrR, '#fff', '4P'], ['#5462d8', arrR, '#dde', '5P'], ['#bf8616', arrR, '#fec', '6P'],
];
const swatch = (s, i, sel) => `<button class="sw${sel ? ' sel' : ''}"><b>${svg(19, 19, r(0, 0, 19, 19, s[0]) + (s[1] ? p(s[1], s[2] || '#f4f4e8', 1.300) : '') + (s[3] ? `<text x="9.500" y="18" text-anchor="middle" font-family="Liberation Mono" font-size="${s[3].length > 2 ? 6 : 8}" fill="${s[2]}">${s[3]}</text>` : ''))}</b>${i}</button>`;
document.getElementById('swatches').innerHTML = stitch.map((s, i) => swatch(s, i, i === 2)).join('');
document.getElementById('current').innerHTML = swatch(stitch[2], 2, true);

/* stitch chart: column 1 is at the left edge, row 1 at the bottom */
const CELL = 8.43, ROWS = 56, COLS = 101, BASE = 469;
const X = n => Math.round(0.7 + n * CELL), Y = n => Math.round(BASE - n * CELL);
const DR = '#8b0d0b', RED = '#ec1a0c', GRN = '#087a08', BG = '#10a010', SAL = '#c4695a', OL = '#8c8a0c', MINT = '#c3dcc4', SKY = '#a5c8f0', BLK = '#020203', BRN = '#78413a';
function colour(col, row) {
  const m = col % 3;
  if (col === 1) return BLK;
  if (row <= 5 && row % 2) return col % 2 ? DR : SKY;
  if (row <= 6) return (col + (row === 6 ? 1 : 0)) % 2 ? MINT : SKY;
  if (row === 7) return RED;
  if (row === 8) return m === 1 ? BRN : BLK;
  if (row <= 10) return SKY;
  if (row === 11) return m === 1 ? BLK : MINT;
  if (row <= 13) return OL;
  if (row === 15) return m === 1 ? BLK : m === 2 ? MINT : SKY;
  if (row === 16) return m === 2 ? BLK : m === 1 ? MINT : SKY;
  if (row <= 30) return m === 2 ? MINT : m === 0 ? RED : SKY;
  if (row === 31) return m === 2 ? DR : m === 0 ? OL : GRN;
  if (col === 4 || col === 9) return GRN;
  if (row % 8 === 7) return [BG, BG, SAL, SAL, DR][col % 5];
  return DR;
}
const plain = [BG, SAL, OL, BLK, GRN];
let g = '';
for (let row = 1; row <= ROWS; row++) for (let col = 1; col <= COLS; col++) {
  const f = colour(col, row), x = X(col - 1), y = Y(row), w = X(col) - x, h = Y(row - 1) - y;
  g += `<rect x="${x}" y="${y}" width="${w}" height="${h}" fill="${f}"/>`;
  const warm = f === DR || f === RED;
  if (!plain.includes(f)) g += `<path d="M${x} ${y + .5}h${w}M${x + .5} ${y}v${h}" stroke="${warm ? '#a8887a' : '#688490'}" stroke-opacity="${warm ? .75 : .85}"/>`;
}
for (let n = 10; n < COLS; n += 10) g += `<path d="M${X(n) + .5} 0V${BASE}" stroke="#f5eecb" stroke-opacity=".8"/>`;
for (let n = 10; n < ROWS; n += 10) g += `<path d="M9 ${Y(n) + .5}H848" stroke="#f5eedb" stroke-opacity=".85"/>`;
g += '<path d="M94.500 0V400" stroke="#8e99a4"/><path d="M0 274.500H848" stroke="#27352c"/><circle cx="94" cy="274" r="19" fill="#18cc1c" fill-opacity=".92"/>';
for (let i = 0; i < 6; i++) g += `<circle cx="80.500" cy="${212.500 + i * 8.5}" r="4" fill="none" stroke="${i === 3 || i === 4 ? '#c3a2dc' : '#e4edf5'}"/>`;
for (let i = 0; i < 2; i++) g += `<circle cx="97.500" cy="${212.500 + i * 8.5}" r="4" fill="none" stroke="#f5d9cc"/>`;
g += '<path d="M94.500 275v16l4-4 3 6 3-1-3-6h5z" fill="#fff" stroke="#333" stroke-width=".7"/>';
document.getElementById('fabric').innerHTML = g;

let top1 = '', left = '';
for (let n = 0; n <= 102; n++) top1 += `<path d="M${X(n) + .5} ${n === 0 || n === 11 ? 0 : 11}V17" stroke="#222"/>`;
for (let n = 5; n <= 100; n += 5) top1 += `<text x="${X(n) - 4}" y="9" text-anchor="middle" fill="${n % 10 ? '#333' : '#c82230'}">${n}</text>`;
for (let n = 1; n <= ROWS; n++) left += `<path d="M11 ${Y(n) + .5}h6" stroke="#222"/>`;
for (let n = 5; n <= 55; n += 5) left += `<text transform="translate(9 ${Y(n) + 4}) rotate(-90)" text-anchor="middle" fill="${n % 10 ? '#333' : '#c82230'}">${n}</text>`;
left += '<path d="M0 274.500h17" stroke="#222"/>';
const font = 'font-family="Liberation Sans" font-size="9"';
document.getElementById('rulerTop').innerHTML = `<g ${font}>${top1}</g>`;
document.getElementById('rulerLeft').innerHTML = `<g ${font}>${left}</g>`;

/* weave columns */
const WX = n => Math.round(n * CELL);
let w = r(0, 0, 247, BASE, '#030306');
for (let row = 1; row <= ROWS; row++) {
  const y = Y(row), h = Y(row - 1) - y, cell = (k, f) => { w += r(WX(k), y, WX(k + 1) - WX(k), h, f); };
  cell(0, '#2146b4'); cell(5, '#0b78bc'); cell(13, '#96e8bc'); cell(21, '#eef060');
  if (row > 31) cell(6, '#087a10'); else if (row > 13) cell(6, '#837f12'); else if (row < 12 && row !== 8) cell(6, '#9c1218');
  const green = row < 8 ? row % 2 === 0 : row % 2 === 1;
  if (![8, 12, 13].includes(row)) cell(9, green ? '#087a10' : '#9c1218');
}
for (let row = 1; row <= ROWS; row++) for (let k = 1; k < 29; k++) {
  if (k === 5 || k === 6) continue;
  const x = WX(k), y = Y(row);
  if (k !== 9) w += `<path d="M${x} ${y + .5}H${WX(k + 1)}" stroke="#77777e"/>`;
  if (k !== 7) w += `<path d="M${x + .5} ${y}V${Y(row - 1)}" stroke="#66666c"/>`;
}
for (const n of [4, 14, 24]) w += `<path d="M${WX(n) + .5} 0V${BASE}" stroke="#ddd"/>`;
for (let n = 10; n < ROWS; n += 10) w += `<path d="M0 ${Y(n) + .5}H247" stroke="#e6e6e8"/>`;
for (let k = 1; k < 5; k++) for (let j = 0; j < 2; j++) w += `<circle cx="${WX(k) + 4.5}" cy="${212.500 + j * 8.5}" r="4" fill="#12040a" stroke="#8c2438" stroke-dasharray="2 1"/>`;
w += `<path d="M246.500 0V${BASE}" stroke="#8a6a28"/><path d="M18.500 ${BASE}v18" stroke="#333"/>`;
document.getElementById('weave').innerHTML = w;
```
